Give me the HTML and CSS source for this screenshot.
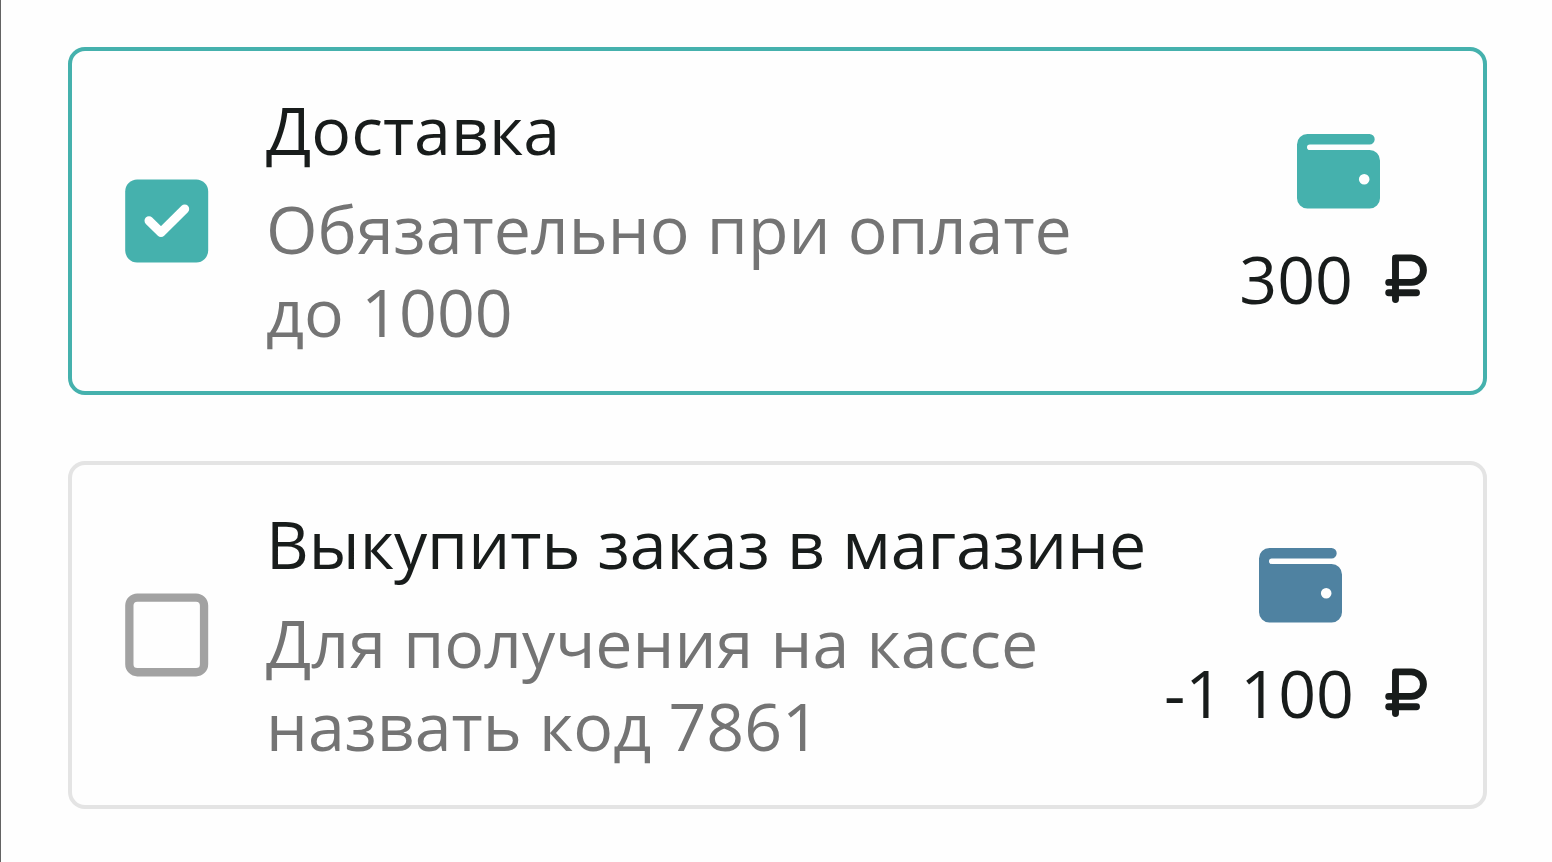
FILE: index.html
```html
<!DOCTYPE html>
<html lang="ru">
<head>
<meta charset="utf-8">
<title>Доставка</title>
<link rel="stylesheet" href="styles.css">
</head>
<body>
<main class="options">
  <section class="card card--selected">
    <svg class="checkbox" viewBox="0 0 84 84"><rect x="0.200" y="0.400" width="83" height="83" rx="12" fill="#45b1ad"/><path d="M24 41.700 36 53.500 59.700 30" fill="none" stroke="#fff" stroke-width="9" stroke-linecap="round" stroke-linejoin="round"/></svg>
    <div class="info">
      <h2 class="title">Доставка</h2>
      <p class="note">Обязательно при оплате<br>до 1000</p>
    </div>
    <div class="cost">
      <svg class="wallet" viewBox="0 0 83 75"><path fill="currentColor" fill-rule="evenodd" d="M10.400 0H72.500a5.200 5.200 0 0 1 0 10.400H12.800a2.800 2.800 0 0 0 0 5.600H72.600A10.400 10.400 0 0 1 83 26.400V64.200A10.400 10.400 0 0 1 72.600 74.600H10.400A10.400 10.400 0 0 1 0 64.200V10.400A10.400 10.400 0 0 1 10.400 0ZM67.200 40a5.300 5.300 0 1 0 0 10.600a5.300 5.300 0 0 0 0-10.600Z"/></svg>
      <div class="price"><span>300</span><svg class="ruble" viewBox="0 0 42 50"><path d="M10.500 45.500V3.900H26.200a12.250 12.250 0 0 1 0 24.500H3.700M3.700 38.700H31.500" fill="none" stroke="currentColor" stroke-width="6.900" stroke-linecap="round" stroke-linejoin="round"/></svg></div>
    </div>
  </section>
  <section class="card">
    <svg class="checkbox" viewBox="0 0 84 84"><rect x="4.350" y="4.550" width="74.700" height="74.700" rx="8" fill="none" stroke="#a2a2a2" stroke-width="8.300"/></svg>
    <div class="info">
      <h2 class="title">Выкупить заказ в магазине</h2>
      <p class="note">Для получения на кассе<br>назвать код 7861</p>
    </div>
    <div class="cost cost--discount">
      <svg class="wallet" viewBox="0 0 83 75"><path fill="currentColor" fill-rule="evenodd" d="M10.400 0H72.500a5.200 5.200 0 0 1 0 10.400H12.800a2.800 2.800 0 0 0 0 5.600H72.600A10.400 10.400 0 0 1 83 26.400V64.200A10.400 10.400 0 0 1 72.600 74.600H10.400A10.400 10.400 0 0 1 0 64.200V10.400A10.400 10.400 0 0 1 10.400 0ZM67.200 40a5.300 5.300 0 1 0 0 10.600a5.300 5.300 0 0 0 0-10.600Z"/></svg>
      <div class="price"><span>-1 100</span><svg class="ruble" viewBox="0 0 42 50"><path d="M10.500 45.500V3.900H26.200a12.250 12.250 0 0 1 0 24.500H3.700M3.700 38.700H31.500" fill="none" stroke="currentColor" stroke-width="6.900" stroke-linecap="round" stroke-linejoin="round"/></svg></div>
    </div>
  </section>
</main>
</body>
</html>
```

FILE: styles.css
```css
* { box-sizing: border-box; }
body {
  margin: 0;
  background: #fefefe;
  font: 400 66.25px/83px "Open Sans", "Noto Sans", sans-serif;
  color: #181c1b;
}
.options {
  display: flex;
  flex-direction: column;
  gap: 66px;
  height: 862px;
  padding: 47px 65px 0 67px;
  border-left: 1px solid #636363;
}
.card {
  display: flex;
  align-items: center;
  height: 348px;
  padding: 0 45px 0 53px;
  border: 4px solid #e4e4e4;
  border-radius: 17px;
}
.card--selected { border-color: #45b1ad; }
.checkbox { flex: none; width: 84px; height: 84px; }
.info {
  flex: none;
  margin-left: 57px;
  padding-bottom: 1px;
  white-space: nowrap;
}
.title { margin: 0 0 16px; font-size: inherit; font-weight: 400; }
.note { margin: 0; color: #747474; }
.cost {
  display: flex;
  flex-direction: column;
  align-items: center;
  margin-left: auto;
  padding-top: 11px;
  color: #45b1ad;
}
.cost--discount { color: #4f82a1; }
.wallet { width: 83px; height: 75px; }
.price {
  display: flex;
  align-items: center;
  gap: 32px;
  margin-top: 28px;
  padding-right: 11px;
  color: #181c1b;
  white-space: nowrap;
}
.cost--discount .price { gap: 31px; }
.ruble { width: 42px; height: 50px; margin-top: 2px; }
```
